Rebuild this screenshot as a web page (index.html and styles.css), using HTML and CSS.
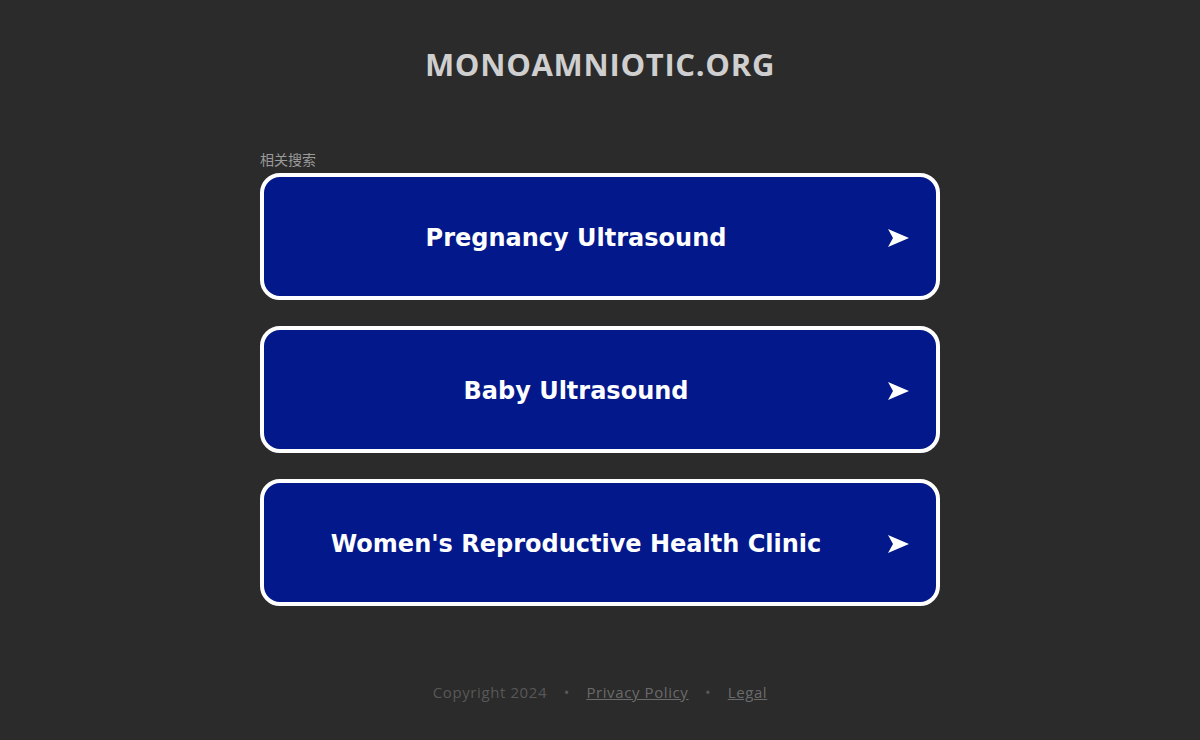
FILE: index.html
```html
<!DOCTYPE html>
<html lang="zh">
<head>
  <meta charset="UTF-8">
  <title>monoamniotic.org</title>
  <link rel="stylesheet" href="styles.css">
</head>
<body>
  <div class="page">
    <h1 class="domain">MONOAMNIOTIC.ORG</h1>

    <div class="searches">
      <div class="searches-title">相关搜索</div>
      <a class="search-link" href="#">
        <span class="search-text">Pregnancy Ultrasound</span>
        <svg class="search-arrow" viewBox="0 0 21 18"><path d="M0 0 L21 9 L0 18 L5 9 Z"/></svg>
      </a>
      <a class="search-link" href="#">
        <span class="search-text">Baby Ultrasound</span>
        <svg class="search-arrow" viewBox="0 0 21 18"><path d="M0 0 L21 9 L0 18 L5 9 Z"/></svg>
      </a>
      <a class="search-link" href="#">
        <span class="search-text">Women's Reproductive Health Clinic</span>
        <svg class="search-arrow" viewBox="0 0 21 18"><path d="M0 0 L21 9 L0 18 L5 9 Z"/></svg>
      </a>
    </div>

    <div class="footer">
      <span>Copyright 2024</span>
      <span class="dot">•</span>
      <a href="#">Privacy Policy</a>
      <span class="dot">•</span>
      <a href="#">Legal</a>
    </div>
  </div>
</body>
</html>
```

FILE: styles.css
```css
body {
  margin: 0;
  padding: 0;
  background-color: #2b2b2b;
  font-family: "Open Sans", Arial, sans-serif;
}

.page {
  display: flex;
  flex-direction: column;
  align-items: center;
  height: 740px;
}

.domain {
  margin: 44px 0 0;
  font-size: 31px;
  font-weight: 700;
  line-height: 40px;
  color: #cfcfcf;
  letter-spacing: 0.7px;
}

.searches {
  width: 680px;
  margin-top: 67px;
  display: flex;
  flex-direction: column;
}

.searches-title {
  font-family: "Noto Sans CJK SC", sans-serif;
  font-size: 14px;
  line-height: 17px;
  color: #9a9a9a;
  margin-bottom: 5px;
}

.search-link {
  display: flex;
  align-items: center;
  height: 119px;
  margin-bottom: 26px;
  border: 4px solid #ffffff;
  border-radius: 20px;
  background-color: #02188b;
  text-decoration: none;
  color: #ffffff;
}

.search-text {
  flex: 1;
  padding-top: 3px;
  text-align: center;
  font-family: "DejaVu Sans", Verdana, sans-serif;
  font-weight: 700;
  font-size: 24px;
}

.search-arrow {
  width: 21px;
  height: 18px;
  margin: 2px 27px 0 0;
  fill: #ffffff;
}

.footer {
  margin-top: 50px;
  font-size: 15px;
  letter-spacing: 0.6px;
  color: #585858;
}

.footer a {
  color: #6a6a6a;
}

.dot {
  margin: 0 12px;
}
```
